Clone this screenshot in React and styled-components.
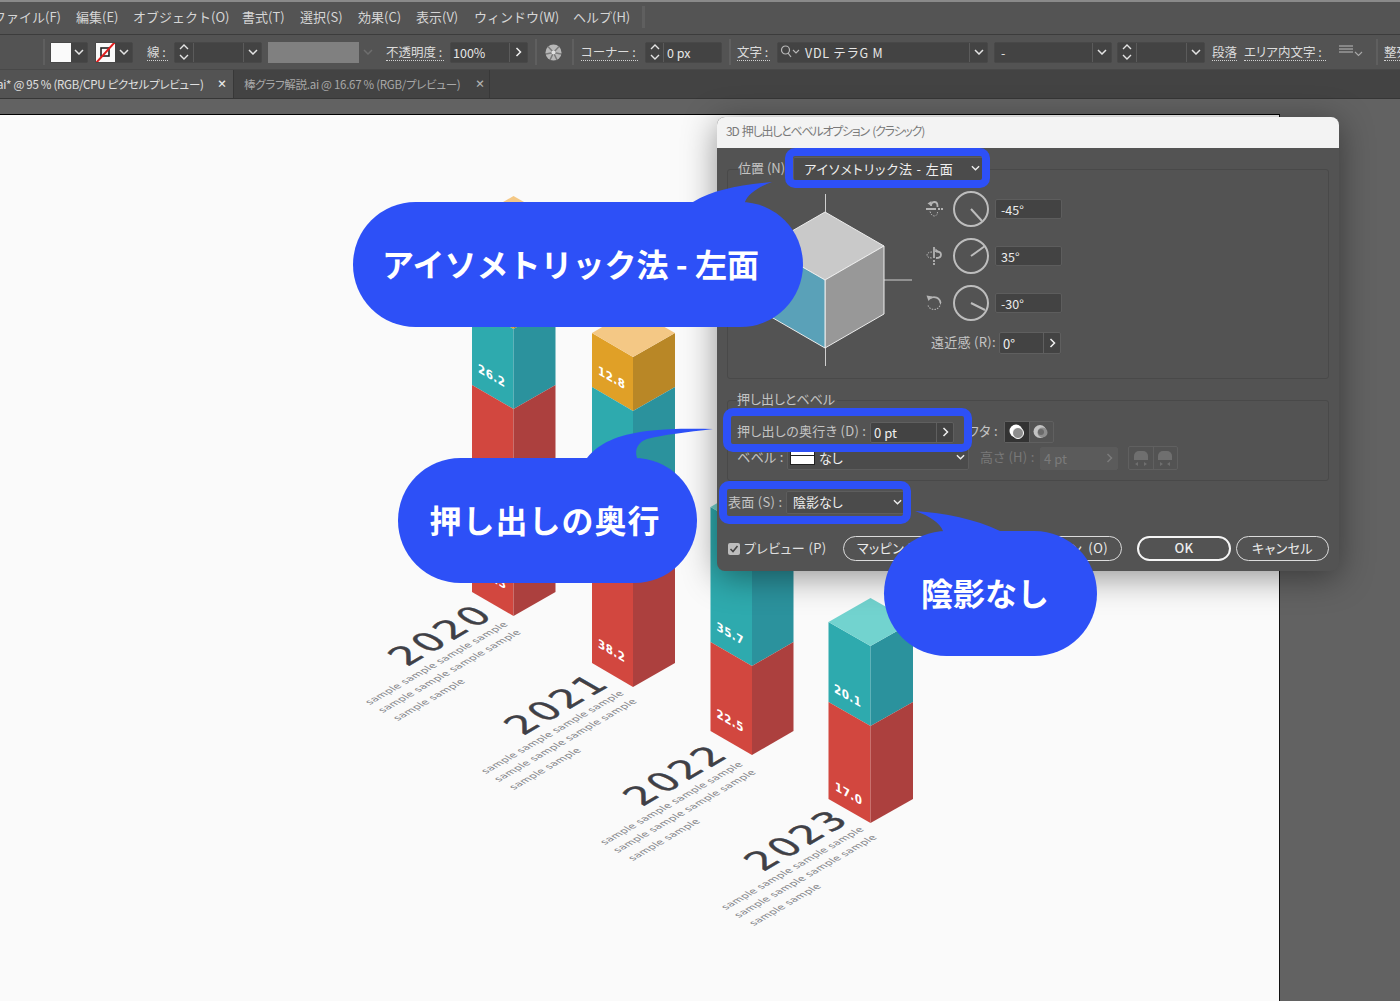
import React from "react";
import styled, { createGlobalStyle } from "styled-components";

const JP = `"Noto Sans CJK JP", "Noto Sans", sans-serif`;
const BLUE = "#2d50f7";

const Global = createGlobalStyle`
  html, body { margin: 0; padding: 0; background: #626262; overflow: hidden; }
  * { box-sizing: border-box; }
`;

const Root = styled.div`
  position: relative;
  width: 1400px;
  height: 1001px;
  overflow: hidden;
  display: flex;
  flex-direction: column;
  font-family: ${JP};
  background: #626262;
`;

/* ---------- menu ---------- */
const MenuBar = styled.div`
  height: 35px;
  flex: none;
  display: flex;
  align-items: center;
  background: #545454;
  border-top: 2px solid #8a8a8a;
  border-bottom: 1px solid #3c3c3c;
  padding-bottom: 3px;
`;
const MenuItem = styled.span`
  font-size: 13px;
  line-height: 18px;
  color: #d6d6d6;
  white-space: nowrap;
  width: ${(p) => p.$w}px;
  margin-left: ${(p) => p.$ml}px;
  flex: none;
`;
const MenuSep = styled.i`
  width: 3px;
  height: 22px;
  background: #5f5f5f;
  margin-left: 11px;
  flex: none;
`;

/* ---------- toolbar ---------- */
const Toolbar = styled.div`
  height: 34px;
  flex: none;
  display: flex;
  align-items: center;
  background: #535353;
  overflow: hidden;
`;
const Sep = styled.i`
  flex: none;
  width: 2px;
  height: 26px;
  background: #5f5f5f;
  margin-left: ${(p) => p.$ml}px;
`;
const ToolLabel = styled.span`
  flex: none;
  font-size: 12.5px;
  line-height: 16px;
  color: #dcdcdc;
  white-space: nowrap;
  font-feature-settings: "palt";
  border-bottom: 1px dotted #d0d0d0;
  width: ${(p) => p.$w}px;
  margin-left: ${(p) => p.$ml}px;
`;
const Control = styled.div`
  flex: none;
  height: 21px;
  display: flex;
  align-items: stretch;
  border: 1px solid #484848;
  border-radius: 2px;
  background: ${(p) => p.$bg || "#434343"};
  width: ${(p) => p.$w}px;
  margin-left: ${(p) => p.$ml}px;
`;
const Cell = styled.div`
  flex: ${(p) => (p.$w ? "none" : 1)};
  width: ${(p) => (p.$w ? `${p.$w}px` : "auto")};
  display: flex;
  align-items: center;
  justify-content: ${(p) => (p.$left ? "flex-start" : "center")};
  padding-left: ${(p) => (p.$left ? p.$left : 0)}px;
  background: ${(p) => p.$bg || "transparent"};
  border-left: ${(p) => (p.$line ? "1px solid #5b5b5b" : "none")};
  font-size: 12.5px;
  color: #e6e6e6;
  white-space: nowrap;
  overflow: hidden;
`;
const FontName = styled.span`
  margin-left: 5px;
  letter-spacing: 0.7px;
  font-size: 12.5px;
`;
const DimBar = styled.div`
  flex: none;
  width: 91px;
  height: 21px;
  background: #808080;
  margin-left: 6px;
`;
const PlainIcon = styled.div`
  flex: none;
  display: flex;
  align-items: center;
  justify-content: center;
  width: ${(p) => p.$w}px;
  margin-left: ${(p) => p.$ml}px;
`;

/* ---------- tabs ---------- */
const TabBar = styled.div`
  height: 30px;
  flex: none;
  display: flex;
  background: #434343;
  border-top: 1px solid #484848;
  border-bottom: 1px solid #363636;
`;
const Tab = styled.div`
  flex: none;
  width: ${(p) => p.$w}px;
  display: flex;
  align-items: center;
  overflow: hidden;
  background: ${(p) => (p.$active ? "#535353" : "#434343")};
  border-right: 1px solid #383838;
`;
const TabText = styled.span`
  flex: none;
  width: ${(p) => p.$w}px;
  margin-left: ${(p) => p.$ml}px;
  font-size: 11.5px;
  letter-spacing: -0.28px;
  white-space: nowrap;
  font-feature-settings: "palt";
  color: ${(p) => (p.$active ? "#e0e0e0" : "#a8a8a8")};
`;
const TabClose = styled.span`
  flex: none;
  margin-left: ${(p) => p.$ml}px;
  font-size: 10px;
  font-weight: 900;
  line-height: 12px;
  color: ${(p) => (p.$active ? "#e8e8e8" : "#b0b0b0")};
`;
const RulerStrip = styled.div`
  height: 15px;
  flex: none;
  background: #626262;
`;

/* ---------- workspace ---------- */
const Workspace = styled.div`
  flex: 1;
  display: flex;
  min-height: 0;
`;
const Canvas = styled.div`
  flex: none;
  width: 1280px;
  background: #fafafa;
  border-top: 1px solid #000;
  border-right: 1px solid #111;
`;
const ArtSvg = styled.svg`
  display: block;
  width: 1279px;
  height: 886px;
`;

/* ---------- dialog ---------- */
const Dialog = styled.div`
  position: absolute;
  left: 717px;
  top: 117px;
  width: 622px;
  height: 454px;
  background: #535353;
  border-radius: 8px;
  box-shadow: 0 6px 34px rgba(0, 0, 0, 0.42);
  display: flex;
  flex-direction: column;
  overflow: hidden;
`;
const TitleBar = styled.div`
  height: 31px;
  flex: none;
  background: #f3f3f3;
  display: flex;
  align-items: center;
  padding: 0 0 4px 9px;
  font-size: 12px;
  letter-spacing: -1.25px;
  word-spacing: 2px;
  font-feature-settings: "palt";
  color: #7a7a7a;
`;
const DialogBody = styled.div`
  flex: 1;
  padding: 21px 10px 0 10px;
  display: flex;
  flex-direction: column;
  color: #c4c4c4;
`;
const Group = styled.div`
  flex: none;
  height: ${(p) => p.$h}px;
  margin-top: ${(p) => p.$mt || 0}px;
  border: 1px solid #494949;
  border-radius: 3px;
  padding-left: ${(p) => p.$pl}px;
`;
const GroupHead = styled.div`
  height: 20px;
  margin-top: -11px;
  display: flex;
  align-items: center;
`;
const GroupLegend = styled.span`
  background: #535353;
  font-size: 13px;
  line-height: 18px;
  margin-bottom: 2px;
  color: #c4c4c4;
  font-feature-settings: "palt";
  padding-right: 2px;
`;
const Row = styled.div`
  display: flex;
  align-items: center;
  height: ${(p) => p.$h}px;
  margin-top: ${(p) => p.$mt || 0}px;
`;
const FieldLabel = styled.span`
  flex: none;
  width: ${(p) => p.$w}px;
  margin-left: ${(p) => p.$ml || 0}px;
  padding-bottom: 2px;
  font-size: 13px;
  line-height: 18px;
  letter-spacing: 0.3px;
  white-space: nowrap;
  font-feature-settings: "palt";
  color: ${(p) => (p.$off ? "#787878" : "#c4c4c4")};
`;
const Select = styled.div`
  flex: none;
  width: ${(p) => p.$w}px;
  height: ${(p) => p.$h}px;
  margin-left: ${(p) => p.$ml || 0}px;
  display: flex;
  align-items: center;
  justify-content: space-between;
  padding: 0 ${(p) => p.$pr || 3}px 2px ${(p) => p.$pl || 6}px;
  background: #4b4b4b;
  border: 1px solid #5d5d5d;
  border-radius: 2px;
  font-size: 13px;
  color: #f0f0f0;
  white-space: nowrap;
  font-feature-settings: "palt";
  letter-spacing: ${(p) => p.$ls || 0}px;
`;
const SelectValue = styled.span`
  display: flex;
  align-items: center;
  gap: 4px;
`;
const Swatch = styled.i`
  display: block;
  width: 25px;
  height: 14px;
  margin-top: 2px;
  border: 1px solid #222;
  background: linear-gradient(#fff 0 3px, #222 3px 4px, #fff 4px);
`;
const CubeRow = styled.div`
  display: flex;
  margin-top: 15px;
`;
const CubeSvg = styled.svg`
  flex: none;
  width: 177px;
  height: 172px;
`;
const Dials = styled.div`
  margin-left: 10px;
  margin-top: -3px;
  display: flex;
  flex-direction: column;
  gap: 11px;
`;
const DialRow = styled.div`
  display: flex;
  align-items: center;
  height: 36px;
`;
const DialFace = styled.svg`
  flex: none;
  margin-left: 10px;
`;
const NumBox = styled.div`
  flex: none;
  width: 67px;
  height: 20px;
  margin-left: 6px;
  padding-left: 5px;
  display: flex;
  align-items: center;
  background: #434343;
  border: 1px solid #5d5d5d;
  border-radius: 2px;
  font-size: 12.5px;
  color: #ececec;
`;
const StepBox = styled.div`
  flex: none;
  display: flex;
  align-items: stretch;
  width: ${(p) => p.$w}px;
  height: ${(p) => p.$h}px;
  margin-left: ${(p) => p.$ml || 0}px;
  background: ${(p) => (p.$off ? "#5b5b5b" : "#434343")};
  border: 1px solid ${(p) => (p.$off ? "#5b5b5b" : "#5f5f5f")};
  border-radius: 2px;
  font-size: 13px;
  color: ${(p) => (p.$off ? "#7b7b7b" : "#f0f0f0")};
`;
const StepValue = styled.span`
  flex: 1;
  display: flex;
  align-items: center;
  padding-left: 3px;
`;
const StepArrow = styled.span`
  flex: none;
  width: 17px;
  display: flex;
  align-items: center;
  justify-content: center;
  border-left: 1px solid ${(p) => (p.$off ? "#5b5b5b" : "#5f5f5f")};
`;
const IconGroup = styled.div`
  flex: none;
  display: flex;
  width: 50px;
  height: ${(p) => p.$h}px;
  margin-left: ${(p) => p.$ml}px;
  border: 1px solid #606060;
  border-radius: 2px;
`;
const IconCell = styled.span`
  flex: 1;
  display: flex;
  align-items: center;
  justify-content: center;
  background: ${(p) => (p.$on ? "#333" : "transparent")};
  & + & { border-left: 1px solid #606060; }
`;
const SurfaceRow = styled.div`
  display: flex;
  align-items: center;
  height: 23px;
  margin-top: 10px;
  margin-left: 1px;
`;
const Footer = styled.div`
  display: flex;
  align-items: center;
  height: 25px;
  margin-top: 22px;
  margin-left: 1px;
`;
const CheckBox = styled.span`
  flex: none;
  width: 12px;
  height: 12px;
  background: #bdbdbd;
  border-radius: 2px;
  display: flex;
  align-items: center;
  justify-content: center;
`;
const CheckLabel = styled.span`
  flex: none;
  width: 99px;
  margin-left: 4px;
  padding-bottom: 2px;
  font-size: 13px;
  letter-spacing: 0.4px;
  color: #e0e0e0;
  font-feature-settings: "palt";
  white-space: nowrap;
`;
const PillButton = styled.button`
  flex: none;
  width: ${(p) => p.$w}px;
  height: 25px;
  margin-left: ${(p) => p.$ml || 0}px;
  padding: 0 ${(p) => p.$pr || 0}px 2px ${(p) => p.$pl || 0}px;
  background: transparent;
  border: ${(p) => (p.$primary ? "2.5px solid #f5f5f5" : "1.5px solid #dcdcdc")};
  border-radius: 13px;
  font-family: ${JP};
  font-size: 13px;
  font-weight: ${(p) => (p.$primary ? 500 : 400)};
  font-feature-settings: "palt";
  letter-spacing: 0.4px;
  word-spacing: 3px;
  color: #ececec;
  white-space: nowrap;
  text-align: ${(p) => (p.$pr ? "right" : p.$pl ? "left" : "center")};
`;
const Highlight = styled.div`
  position: absolute;
  left: ${(p) => p.$x}px;
  top: ${(p) => p.$y}px;
  width: ${(p) => p.$w}px;
  height: ${(p) => p.$h}px;
  border: 8px solid ${BLUE};
  border-radius: 10px;
  pointer-events: none;
`;

/* ---------- callouts ---------- */
const Callout = styled.div`
  position: absolute;
  left: ${(p) => p.$x}px;
  top: ${(p) => p.$y}px;
  width: ${(p) => p.$w}px;
  height: 125px;
  padding: 0 ${(p) => p.$pr}px 4px 0;
  border-radius: 62.5px;
  background: ${BLUE};
  display: flex;
  align-items: center;
  justify-content: center;
  color: #fff;
  font-size: 32px;
  font-weight: 700;
  letter-spacing: ${(p) => p.$ls || 0}px;
  white-space: nowrap;
`;
const Tail = styled.svg`
  position: absolute;
  left: ${(p) => p.$x}px;
  top: ${(p) => p.$y}px;
  overflow: visible;
`;

/* ---------- little drawings ---------- */
const Chevron = ({ c = "#e4e4e4", w = 10, h = 6 }) => (
  <svg width={w} height={h} viewBox="0 0 10 6">
    <path d="M1 1l4 4 4-4" fill="none" stroke={c} strokeWidth="1.5" />
  </svg>
);
const Arrow = ({ c = "#f0f0f0" }) => (
  <svg width="7" height="10" viewBox="0 0 7 10">
    <path d="M1.5 1l4 4-4 4" fill="none" stroke={c} strokeWidth="1.5" />
  </svg>
);
const Stepper = () => (
  <svg width="10" height="18" viewBox="0 0 10 18">
    <path d="M1 6l4-4 4 4M1 12l4 4 4-4" fill="none" stroke="#e4e4e4" strokeWidth="1.4" />
  </svg>
);
const StrokeSwatch = () => (
  <svg width="19" height="21" viewBox="0 0 19 21">
    <rect width="19" height="21" fill="#fafafa" />
    <rect x="5" y="6" width="8" height="8" fill="none" stroke="#222" strokeWidth="1.6" />
    <path d="M0 21L19 0" stroke="#e11d1d" strokeWidth="2" />
  </svg>
);
const Globe = () => (
  <svg width="17" height="17" viewBox="0 0 17 17">
    <circle cx="8.5" cy="8.5" r="8" fill="#b8b8b8" />
    <path d="M8.5 8.5L3 2.5M8.5 8.5L14 2.5M8.5 8.5L1 10M8.5 8.5L16 10M8.5 8.5L5 16M8.5 8.5L12 16" stroke="#7a7a7a" strokeWidth="1.5" />
    <circle cx="8.5" cy="8.5" r="2" fill="#e0e0e0" />
  </svg>
);
const SearchIcon = () => (
  <svg width="20" height="14" viewBox="0 0 20 14">
    <circle cx="5.5" cy="5" r="4" fill="none" stroke="#b8b8b8" strokeWidth="1.2" />
    <path d="M8 8l3 4" stroke="#b8b8b8" strokeWidth="1.2" />
    <path d="M13 5l3 3 3-3" fill="none" stroke="#b8b8b8" strokeWidth="1.1" />
  </svg>
);
const LinesIcon = () => (
  <svg width="25" height="16" viewBox="0 0 25 16">
    <path d="M0 2h14M0 5h14M0 8h14" stroke="#bdbdbd" strokeWidth="1" />
    <path d="M16 8l3.5 3.5L23 8" fill="none" stroke="#a8a8a8" strokeWidth="1.1" />
  </svg>
);
const AxisIcon = ({ kind }) => (
  <svg width="18" height="18" viewBox="0 0 18 18" fill="none" stroke="#b4b4b4">
    {kind === 0 && (
      <>
        <path d="M1 9h10M13 9h2M16 9h2" strokeWidth="1.8" />
        <path d="M6 6c0-2.5 1.5-4 3.5-4s3 2 3 4v1" strokeWidth="1.8" />
        <path d="M2.5 3.5l4-2.5v5z" fill="#b4b4b4" stroke="none" />
        <path d="M5 11.5c1 3 2.5 4.5 4.5 4.5s3-2 3-4" strokeWidth="1" strokeDasharray="1.5 1.2" />
      </>
    )}
    {kind === 1 && (
      <>
        <path d="M9 0v11M9 13v2M9 16v2" strokeWidth="1.8" />
        <path d="M11 4.5c3 0 5 1.2 5 3.2s-2 3.3-5 3.3" strokeWidth="1.8" />
        <path d="M7 5C4 5 2 6.2 2 8s2 3 5 3" strokeWidth="1" strokeDasharray="1.5 1.2" />
        <path d="M10.5 1.5l4 3.5h-4.5z" fill="#b4b4b4" stroke="none" />
      </>
    )}
    {kind === 2 && (
      <>
        <path d="M5 4.5A6.5 6.5 0 0 1 15.5 9" strokeWidth="1.8" />
        <path d="M15.5 9A6.5 6.5 0 0 1 3 11.5" strokeWidth="1.1" strokeDasharray="1.5 1.2" />
        <path d="M1.5 1.5l6 1-4 4.5z" fill="#b4b4b4" stroke="none" />
      </>
    )}
  </svg>
);
const Dial = ({ x, y }) => (
  <DialFace width="36" height="36" viewBox="0 0 36 36">
    <circle cx="18" cy="18" r="17" fill="none" stroke="#bdbdbd" strokeWidth="2" />
    <path d={`M18 18L${x} ${y}`} stroke="#bdbdbd" strokeWidth="2" />
  </DialFace>
);
const CapOn = () => (
  <svg width="16" height="16" viewBox="0 0 16 16">
    <circle cx="7" cy="7" r="6.5" fill="#fff" />
    <circle cx="9" cy="9" r="5.5" fill="#8d8d8d" stroke="#fff" strokeWidth="1" />
  </svg>
);
const CapOff = () => (
  <svg width="16" height="16" viewBox="0 0 16 16">
    <circle cx="7" cy="7.5" r="6.5" fill="#c4c4c4" />
    <circle cx="9.5" cy="8.5" r="5" fill="#8d8d8d" />
    <circle cx="8" cy="8" r="3" fill="#6a6a6a" />
  </svg>
);
const Hat = ({ flip }) => (
  <svg width="16" height="17" viewBox="0 0 16 17" fill="#6f6f6f">
    <path d="M1 10V6a5 5 0 0 1 5-5h4a5 5 0 0 1 5 5v4z" />
    {flip ? (
      <path d="M3 12l3 2-3 2zM13 12l-3 2 3 2z" />
    ) : (
      <path d="M5 12l-3 2 3 2zM11 12l3 2-3 2z" />
    )}
  </svg>
);

/* ---------- artwork ---------- */
const COL = {
  red: ["#d2473f", "#ac403e"],
  teal: ["#2eaaae", "#2b929d"],
  orange: ["#e0a027", "#b98726"],
};
const D = 24;
const Bar = ({ xl, xc, xr, cap, segs }) => (
  <g>
    {segs.map(([c, t, b]) => (
      <g key={c + t}>
        <polygon points={`${xl},${t} ${xc},${t + D} ${xc},${b + D} ${xl},${b}`} fill={COL[c][0]} />
        <polygon points={`${xc},${t + D} ${xr},${t} ${xr},${b} ${xc},${b + D}`} fill={COL[c][1]} />
      </g>
    ))}
    <polygon
      points={`${xl},${segs[0][1]} ${xc},${segs[0][1] + D} ${xr},${segs[0][1]} ${xc},${segs[0][1] - D}`}
      fill={cap}
    />
  </g>
);
const BARS = [
  { xl: 472, xc: 513.5, xr: 555.5, cap: "#f4c885", segs: [["orange", 220, 305], ["teal", 305, 385], ["red", 385, 592]] },
  { xl: 592, xc: 633, xr: 675, cap: "#f4c885", segs: [["orange", 333, 387], ["teal", 387, 490], ["red", 490, 663]] },
  { xl: 710.5, xc: 752, xr: 793.5, cap: "#72d3cf", segs: [["teal", 507, 642], ["red", 642, 731]] },
  { xl: 828.5, xc: 870.5, xr: 913, cap: "#72d3cf", segs: [["teal", 622, 702], ["red", 702, 799]] },
];
const VALUES = [
  ["26.2", 478, 372], ["19.3", 479, 574], ["12.8", 598, 374], ["38.2", 598, 647],
  ["35.7", 716.5, 630], ["22.5", 716.5, 717], ["20.1", 834, 692], ["17.0", 835, 790],
];
const YEARS = [
  ["2020", 407, 667], ["2021", 523, 736], ["2022", 642, 807], ["2023", 763, 872],
];
const Value = styled.text`
  font-family: "DejaVu Sans", sans-serif;
  font-size: 12px;
  font-weight: 700;
  letter-spacing: 0.5px;
  fill: #fff;
`;
const Year = styled.text`
  font-family: "DejaVu Sans", sans-serif;
  font-size: 36px;
  letter-spacing: 3px;
  fill: #3f4046;
  stroke: #3f4046;
  stroke-width: 0.5px;
`;
const Sample = styled.text`
  font-family: "DejaVu Sans", sans-serif;
  font-size: 10px;
  letter-spacing: 0.2px;
  fill: #85868a;
`;
const floor = (x, y) => `matrix(.866 -.5 .866 .5 ${x} ${y})`;
const wall = (x, y) => `matrix(.866 .5 0 1 ${x} ${y})`;

const Art = () => (
  <ArtSvg viewBox="0 115 1279 886">
    {BARS.map((b) => (
      <Bar key={b.xl} {...b} />
    ))}
    {VALUES.map(([t, x, y]) => (
      <Value key={t} transform={wall(x, y)}>{t}</Value>
    ))}
    {YEARS.map(([t, x, y]) => (
      <g key={t}>
        <Year transform={floor(x, y)}>{t}</Year>
        <Sample transform={floor(x - 37, y + 38)}>sample sample sample sample</Sample>
        <Sample transform={floor(x - 24, y + 46)}>sample sample sample sample</Sample>
        <Sample transform={floor(x - 9, y + 54)}>sample sample</Sample>
      </g>
    ))}
  </ArtSvg>
);

const MENU = [
  ["ファイル(F)", 68, -7], ["編集(E)", 43, 15], ["オブジェクト(O)", 95, 14], ["書式(T)", 44, 14],
  ["選択(S)", 44, 14], ["効果(C)", 44, 14], ["表示(V)", 44, 14], ["ウィンドウ(W)", 85, 14], ["ヘルプ(H)", 58, 14],
];
const DIALS = [
  ["-45°", 29, 30, 0], ["35°", 32, 8, 1], ["-30°", 32, 25, 2],
];

export default function App() {
  return (
    <Root>
      <Global />
      <MenuBar>
        {MENU.map(([t, w, ml]) => (
          <MenuItem key={t} $w={w} $ml={ml}>{t}</MenuItem>
        ))}
        <MenuSep />
      </MenuBar>

      <Toolbar>
        <Sep $ml={43} />
        <Control $w={38} $ml={5}>
          <Cell $w={20} $bg="#fafafa" />
          <Cell><Chevron /></Cell>
        </Control>
        <Control $w={38} $ml={7}>
          <Cell $w={19}><StrokeSwatch /></Cell>
          <Cell><Chevron /></Cell>
        </Control>
        <ToolLabel $w={21} $ml={14}>線 :</ToolLabel>
        <Control $w={88} $ml={6}>
          <Cell $w={18}><Stepper /></Cell>
          <Cell $line />
          <Cell $w={18} $line><Chevron /></Cell>
        </Control>
        <DimBar />
        <PlainIcon $w={15} $ml={1}><Chevron c="#6e6e6e" /></PlainIcon>
        <ToolLabel $w={58} $ml={11}>不透明度 :</ToolLabel>
        <Control $w={78} $ml={6}>
          <Cell $left={2}>100%</Cell>
          <Cell $w={18} $line><Arrow /></Cell>
        </Control>
        <Sep $ml={7} />
        <PlainIcon $w={17} $ml={8}><Globe /></PlainIcon>
        <Sep $ml={10} />
        <ToolLabel $w={57} $ml={7}>コーナー :</ToolLabel>
        <Control $w={77} $ml={7}>
          <Cell $w={17}><Stepper /></Cell>
          <Cell $left={3} $line>0 px</Cell>
        </Control>
        <Sep $ml={7} />
        <ToolLabel $w={33} $ml={6}>文字 :</ToolLabel>
        <Control $w={211} $ml={7}>
          <Cell $left={2}>
            <SearchIcon />
            <FontName>VDL テラG M</FontName>
          </Cell>
          <Cell $w={18} $line><Chevron /></Cell>
        </Control>
        <Control $w={118} $ml={6}>
          <Cell $left={6}>-</Cell>
          <Cell $w={19} $line><Chevron /></Cell>
        </Control>
        <Control $w={88} $ml={5}>
          <Cell $w={18}><Stepper /></Cell>
          <Cell $line />
          <Cell $w={18} $line><Chevron /></Cell>
        </Control>
        <ToolLabel $w={25} $ml={7}>段落</ToolLabel>
        <ToolLabel $w={82} $ml={7}>エリア内文字 :</ToolLabel>
        <PlainIcon $w={25} $ml={13}><LinesIcon /></PlainIcon>
        <Sep $ml={12} />
        <ToolLabel $w={26} $ml={6}>整列</ToolLabel>
      </Toolbar>

      <TabBar>
        <Tab $w={234} $active>
          <TabText $w={204} $ml={-3} $active>ai* @ 95 % (RGB/CPU ピクセルプレビュー)</TabText>
          <TabClose $ml={16} $active>×</TabClose>
        </Tab>
        <Tab $w={256}>
          <TabText $w={216} $ml={10}>棒グラフ解説.ai @ 16.67 % (RGB/プレビュー)</TabText>
          <TabClose $ml={15}>×</TabClose>
        </Tab>
      </TabBar>
      <RulerStrip />

      <Workspace>
        <Canvas>
          <Art />
        </Canvas>
      </Workspace>

      <Dialog>
        <TitleBar>3D 押し出しとベベルオプション (クラシック)</TitleBar>
        <DialogBody>
          <Group $h={210} $pl={10}>
            <GroupHead>
              <GroupLegend>位置 (N)</GroupLegend>
              <Select $w={191} $h={24} $ml={6} $pl={10} $ls={0.9}>
                <span>アイソメトリック法 - 左面</span>
                <Chevron c="#f0f0f0" w={9} />
              </Select>
            </GroupHead>
            <CubeRow>
              <CubeSvg viewBox="738 194 177 172">
                <path d="M825.5 194V366M884 280H912" stroke="#cfcfcf" strokeWidth="1" />
                <polygon points="825,212 884,246 825,280 766,246" fill="#c9c9c9" stroke="#ececec" />
                <polygon points="825,280 884,246 884,314 825,348" fill="#989898" stroke="#ececec" />
                <polygon points="766,246 825,280 825,348 766,314" fill="#5aa1b8" stroke="#ececec" />
              </CubeSvg>
              <Dials>
                {DIALS.map(([v, x, y, k]) => (
                  <DialRow key={v}>
                    <AxisIcon kind={k} />
                    <Dial x={x} y={y} />
                    <NumBox>{v}</NumBox>
                  </DialRow>
                ))}
                <Row $h={22}>
                  <FieldLabel $w={68} $ml={6}>遠近感 (R):</FieldLabel>
                  <StepBox $w={62} $h={22}>
                    <StepValue>0°</StepValue>
                    <StepArrow><Arrow /></StepArrow>
                  </StepBox>
                </Row>
              </Dials>
            </CubeRow>
          </Group>

          <Group $h={81} $mt={21} $pl={9}>
            <GroupHead>
              <GroupLegend>押し出しとベベル</GroupLegend>
            </GroupHead>
            <Row $h={22} $mt={11}>
              <FieldLabel $w={133}>押し出しの奥行き (D) :</FieldLabel>
              <StepBox $w={84} $h={21}>
                <StepValue>0 pt</StepValue>
                <StepArrow><Arrow /></StepArrow>
              </StepBox>
              <FieldLabel $w={36} $ml={14}>フタ :</FieldLabel>
              <IconGroup $h={22} $ml={0}>
                <IconCell $on><CapOn /></IconCell>
                <IconCell><CapOff /></IconCell>
              </IconGroup>
            </Row>
            <Row $h={24} $mt={3}>
              <FieldLabel $w={50}>ベベル :</FieldLabel>
              <Select $w={182} $h={24} $pl={2}>
                <SelectValue><Swatch />なし</SelectValue>
                <Chevron c="#f0f0f0" w={9} />
              </Select>
              <FieldLabel $w={60} $ml={11} $off>高さ (H) :</FieldLabel>
              <StepBox $w={78} $h={23} $off>
                <StepValue>4 pt</StepValue>
                <StepArrow $off><Arrow c="#7b7b7b" /></StepArrow>
              </StepBox>
              <IconGroup $h={24} $ml={10} $off>
                <IconCell><Hat /></IconCell>
                <IconCell><Hat flip /></IconCell>
              </IconGroup>
            </Row>
          </Group>

          <SurfaceRow>
            <FieldLabel $w={58}>表面 (S) :</FieldLabel>
            <Select $w={121} $h={23} $pr={4}>
              <span>陰影なし</span>
              <Chevron c="#f0f0f0" w={9} />
            </Select>
          </SurfaceRow>

          <Footer>
            <CheckBox>
              <svg width="10" height="10" viewBox="0 0 10 10">
                <path d="M1.5 5l2.5 2.5L8.5 2" fill="none" stroke="#444" strokeWidth="1.6" />
              </svg>
            </CheckBox>
            <CheckLabel>プレビュー (P)</CheckLabel>
            <PillButton $w={122} $pl={13}>マッピング (M)...</PillButton>
            <PillButton $w={132} $ml={25} $pr={13}>詳細オプション (O)</PillButton>
            <PillButton $w={94} $ml={15} $primary>OK</PillButton>
            <PillButton $w={93} $ml={5}>キャンセル</PillButton>
          </Footer>
        </DialogBody>
        <Highlight $x={68} $y={31} $w={205} $h={40} />
        <Highlight $x={6} $y={291} $w={249} $h={44} />
        <Highlight $x={2} $y={364} $w={192} $h={43} />
      </Dialog>

      <Callout $x={353} $y={202} $w={450} $pr={15}>
        <Tail $x={340} $y={-22} width="90" height="30" viewBox="0 0 90 30">
          <path d="M0 22C20 10 45 5 79 2C65 7 55 14 52 22V30H0Z" fill={BLUE} />
        </Tail>
        アイソメトリック法 - 左面
      </Callout>
      <Callout $x={398} $y={458} $w={299} $pr={5} $ls={1}>
        <Tail $x={189} $y={-30} width="130" height="34" viewBox="0 0 130 34">
          <path d="M0 30C12 15 30 7 60 3C80 .5 105 .5 126 1C100 4 75 7 60 11C52 14 47 20 50 30V34H0Z" fill={BLUE} />
        </Tail>
        押し出しの奥行
      </Callout>
      <Callout $x={884} $y={531} $w={213} $pr={11}>
        <Tail $x={31} $y={-20} width="90" height="26" viewBox="0 0 90 26">
          <path d="M0 0C30 2 60 8 85 20V26H28V20C25 12 15 5 0 0Z" fill={BLUE} />
        </Tail>
        陰影なし
      </Callout>
    </Root>
  );
}
